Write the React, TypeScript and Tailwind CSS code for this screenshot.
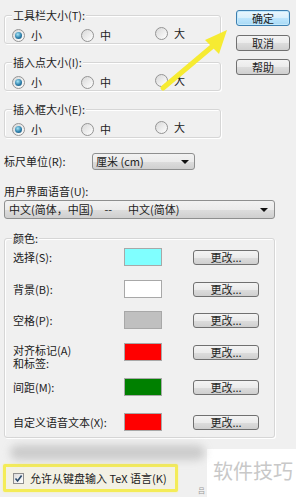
import React from "react";

const btn =
  "flex items-center justify-center rounded-[3px] border border-[#707070] bg-[linear-gradient(#f4f4f4,#ebebeb_50%,#dddddd_51%,#cfcfcf)] text-[11px] leading-[12px] text-[#1e1e1e]";

function Radio({ checked, label }: { checked?: boolean; label: string }) {
  return (
    <div className="flex items-center gap-[6px]">
      <span className="flex h-[13px] w-[13px] items-center justify-center rounded-full border border-[#949494] bg-[linear-gradient(135deg,#d8d8d8,#ffffff)]">
        {checked && (
          <span className="h-[7px] w-[7px] rounded-full bg-[radial-gradient(circle_at_40%_35%,#a6e6f7,#2d7fab_55%,#174a6c)]" />
        )}
      </span>
      <span>{label}</span>
    </div>
  );
}

function Group({ title, className, children }: { title: string; className?: string; children: React.ReactNode }) {
  return (
    <div className={"rounded-[3px] border border-[#d6d6d6] shadow-[inset_1px_1px_0_#fff,1px_1px_0_#fff] " + (className ?? "")}>
      <div className="-mt-[8px] ml-[7px] h-[14px] leading-[14px]">
        <span className="bg-[#f0f0f0] px-[1px]">{title}</span>
      </div>
      {children}
    </div>
  );
}

function SizeGroup({ title, className }: { title: string; className?: string }) {
  return (
    <Group title={title} className={className}>
      <div className="mb-[3px] mt-[5px] flex h-[13px] pl-[7px]">
        <div className="w-[69px]">
          <Radio checked label="小" />
        </div>
        <div className="w-[74px]">
          <Radio label="中" />
        </div>
        <Radio label="大" />
      </div>
    </Group>
  );
}

function ColorRow({ label, color, className, twoLine }: { label: React.ReactNode; color: string; className?: string; twoLine?: boolean }) {
  return (
    <div className={"flex h-[18px] items-center " + (className ?? "")}>
      <div className={"w-[111px] " + (twoLine ? "mt-[1px] self-start leading-[13px]" : "leading-[12px]")}>{label}</div>
      <div className={"h-[18px] w-[38px] border border-[#a8a8a8] " + color} />
      <button className={btn + " ml-[31px] h-[15px] w-[66px]"}>更改...</button>
    </div>
  );
}

export default function App() {
  return (
    <div className="relative flex h-[497px] w-[296px] flex-col overflow-hidden bg-[#f0f0f0] font-['Noto_Sans_CJK_SC',sans-serif] text-[11px] text-[#222]">
      {/* top: size groups + dialog buttons */}
      <div className="flex">
        <div className="ml-[4px] w-[217px]">
          <SizeGroup title="工具栏大小(T):" className="mt-[15px]" />
          <SizeGroup title="插入点大小(I):" className="mt-[18px]" />
          <SizeGroup title="插入框大小(E):" className="mt-[18px]" />
        </div>
        <div className="ml-[15px] w-[54px]">
          <button className="mt-[10px] flex h-[16px] w-full items-center justify-center rounded-[3px] border border-[#3c7fb1] bg-[linear-gradient(#eaf6fd,#d9f0fc_50%,#bee6fd_51%,#a7d9f5)] leading-[12px] text-[#1e1e1e] shadow-[inset_0_0_0_1px_#c4e9fb]">
            确定
          </button>
          <button className={btn + " mt-[9px] h-[16px] w-full"}>取消</button>
          <button className={btn + " mt-[8px] h-[16px] w-full"}>帮助</button>
        </div>
      </div>

      {/* ruler unit */}
      <div className="ml-[4px] mt-[15px] flex h-[17px] items-center">
        <div className="w-[88px]">标尺单位(R):</div>
        <div className="flex h-[17px] w-[103px] items-center justify-between rounded-[3px] border border-[#8e8f8f] bg-[linear-gradient(#f2f2f2,#ebebeb_50%,#dddddd_51%,#cfcfcf)] pl-[3px] pr-[5px]">
          <span>厘米 (cm)</span>
          <span className="h-0 w-0 border-x-[4px] border-t-[4px] border-x-transparent border-t-[#111]" />
        </div>
      </div>

      {/* UI language */}
      <div className="ml-[4px] mt-[14px] h-[14px] leading-[14px]">用户界面语音(U):</div>
      <div className="ml-[4px] mt-[2px] flex h-[19px] w-[271px] items-center rounded-[3px] border border-[#8e8f8f] bg-[linear-gradient(#f2f2f2,#ebebeb_50%,#dddddd_51%,#cfcfcf)] pl-[4px] pr-[6px]">
        <span>中文(简体，中国)</span>
        <span className="ml-[11px]">--</span>
        <span className="ml-[16px]">中文(简体)</span>
        <span className="ml-auto h-0 w-0 border-x-[4px] border-t-[4px] border-x-transparent border-t-[#111]" />
      </div>

      {/* colours */}
      <Group title="颜色:" className="ml-[4px] mt-[19px] w-[271px] pb-[6px]">
        <div className="pl-[8px]">
          <ColorRow label="选择(S):" color="bg-[#80ffff]" className="mt-[3px]" />
          <ColorRow label="背景(B):" color="bg-white" className="mt-[14px]" />
          <ColorRow label="空格(P):" color="bg-[#c0c0c0]" className="mt-[13px]" />
          <ColorRow
            label={
              <>
                <div>对齐标记(A)</div>
                <div>和标签:</div>
              </>
            }
            twoLine
            color="bg-[#ff0000]"
            className="mt-[14px]"
          />
          <ColorRow label="间距(M):" color="bg-[#008000]" className="mt-[17px]" />
          <ColorRow label="自定义语音文本(X):" color="bg-[#ff0000]" className="mt-[17px]" />
        </div>
      </Group>

      {/* bottom: blurred strip, TeX checkbox, watermark */}
      <div className="mt-[7px] flex flex-1">
        <div className="flex w-[207px] flex-col">
          <div className="ml-[10px] h-[15px] w-[195px] rounded-full bg-[#bcbcbc] opacity-70 blur-[4px]" />
          <div className="mt-[4px] flex items-end">
            <div className="ml-[3px] flex h-[28px] w-[175px] items-center rounded-[2px] border-[3px] border-[#f4ec58] bg-[#f3f1e4] pl-[7px] shadow-[0_0_2px_#f7f09a]">
              <span className="flex h-[11px] w-[11px] items-center justify-center border border-[#8f8f8f] bg-[linear-gradient(135deg,#dcdcdc,#ffffff)]">
                <svg width="9" height="9" viewBox="0 0 9 9">
                  <path d="M1.5 4.5 L3.6 7 L7.6 1.5" fill="none" stroke="#2a4a6a" strokeWidth="1.6" />
                </svg>
              </span>
              <span className="ml-[6px] whitespace-pre">允许从键盘输入 TeX 语言(K)</span>
            </div>
            <div className="mb-[-2px] ml-[20px] text-[7px] leading-[7px] text-[#9a9a9a]">吕</div>
          </div>
        </div>
        <div className="mt-[4px] flex flex-1 items-start bg-white pl-[6px] pt-[10px]">
          <span className="text-[20px] leading-[24px] text-[#c8c8c8]">软件技巧</span>
        </div>
      </div>

      {/* yellow annotation arrow */}
      <svg className="pointer-events-none absolute left-0 top-0" width="296" height="497">
        <line x1="163" y1="88" x2="214" y2="45" stroke="#f6eb32" strokeWidth="5" strokeLinecap="round" />
        <polygon points="227,30 205,40 219,54" fill="#f6eb32" />
      </svg>
    </div>
  );
}
